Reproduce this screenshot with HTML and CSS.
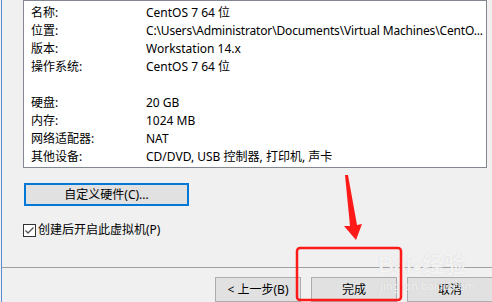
FILE: index.html
```html
<!DOCTYPE html>
<html lang="zh-CN">
<head>
<meta charset="utf-8">
<link rel="stylesheet" href="styles.css">
</head>
<body>
<div class="window">
  <div class="summary">
    <div class="row"><span class="k">名称:</span><span class="v">CentOS 7 64 位</span></div>
    <div class="row"><span class="k">位置:</span><span class="v path">C:\Users\Administrator\Documents\Virtual Machines\CentO...</span></div>
    <div class="row"><span class="k">版本:</span><span class="v">Workstation 14.x</span></div>
    <div class="row"><span class="k">操作系统:</span><span class="v">CentOS 7 64 位</span></div>
    <div class="row"></div>
    <div class="row"><span class="k">硬盘:</span><span class="v">20 GB</span></div>
    <div class="row"><span class="k">内存:</span><span class="v">1024 MB</span></div>
    <div class="row"><span class="k">网络适配器:</span><span class="v">NAT</span></div>
    <div class="row"><span class="k">其他设备:</span><span class="v">CD/DVD, USB 控制器, 打印机, 声卡</span></div>
  </div>
  <div class="custom-btn">自定义硬件(C)...</div>
  <label class="check">
    <span class="box"><svg width="11" height="11" viewBox="0 0 11 11"><path d="M1.5 5.5 L4 8 L9.5 2.5" fill="none" stroke="#555" stroke-width="1.4"/></svg></span>
    <span>创建后开启此虚拟机(P)</span>
  </label>
  <div class="sep"></div>
  <div class="footer">
    <div class="btn">&lt; 上一步(B)</div>
    <div class="btn">完成</div>
    <div class="btn">取消</div>
  </div>
</div>
<div class="watermark"><span class="wm1">Bai<span class="paw">●</span>经验</span><span class="wm2">jingyan.baidu.com</span></div>
<svg class="annot" width="492" height="302" viewBox="0 0 492 302">
  <path d="M345 175 L348 175 L357 225 L362 224 L356 240 L344 226 L350 226 Z" fill="#ff1a1a"/>
  <rect x="297" y="248" width="104" height="52" rx="3" ry="3" fill="none" stroke="#ff1a1a" stroke-width="2.5"/>
</svg>
</body>
</html>
```
FILE: styles.css
```css
html, body {
  margin: 0;
  padding: 0;
  background: #f0f0f0;
  width: 492px;
  height: 302px;
  overflow: hidden;
  font-family: "Noto Sans", "Noto Sans CJK SC", sans-serif;
  font-size: 12px;
  color: #000;
}
.window {
  margin-left: 1px;
  border-left: 1px solid #5a8fd2;
  height: 302px;
  display: flex;
  flex-direction: column;
}
.summary {
  margin-left: 21px;
  width: 462px;
  height: 167px;
  box-sizing: content-box;
  border: 1px solid #828790;
  background: #fff;
}
.row {
  display: flex;
  height: 18px;
  line-height: 18px;
  padding-left: 7px;
  white-space: nowrap;
}
.row:first-child { margin-top: 3px; }
.k { width: 115px; flex: none; }
.v { overflow: hidden; }
.path { letter-spacing: -0.16px; }
.custom-btn {
  margin-top: 15px;
  margin-left: 22px;
  width: 161px;
  height: 19px;
  border: 2px solid #0078d7;
  background: #e1e1e1;
  text-align: center;
  line-height: 19px;
}
.check {
  margin-top: 17px;
  margin-left: 21px;
  display: flex;
  align-items: center;
  gap: 2px;
  height: 14px;
  line-height: 14px;
}
.box {
  width: 11px;
  height: 11px;
  border: 1px solid #333;
  background: #fff;
  display: flex;
}
.sep {
  margin-top: 30px;
  height: 1px;
  background: #a0a0a0;
}
.footer {
  margin-top: 9px;
  margin-left: 213px;
  display: flex;
  gap: 10px;
}
.btn {
  width: 84px;
  height: 23px;
  border: 1px solid #adadad;
  background: #e1e1e1;
  text-align: center;
  line-height: 24px;
  flex: none;
}
.watermark {
  position: absolute;
  left: 378px;
  top: 252px;
  display: flex;
  flex-direction: column;
  color: rgba(255,255,255,0.75);
  text-shadow: 0 0 1px rgba(180,180,180,0.6);
  pointer-events: none;
}
.wm1 { font-size: 22px; line-height: 26px; font-weight: bold; font-family: "Liberation Sans", "Noto Sans CJK SC", sans-serif; }
.paw { font-size: 16px; }
.wm2 { font-size: 11px; line-height: 12px; margin-left: 2px; }
.annot {
  position: absolute;
  left: 0;
  top: 0;
  pointer-events: none;
}
```
